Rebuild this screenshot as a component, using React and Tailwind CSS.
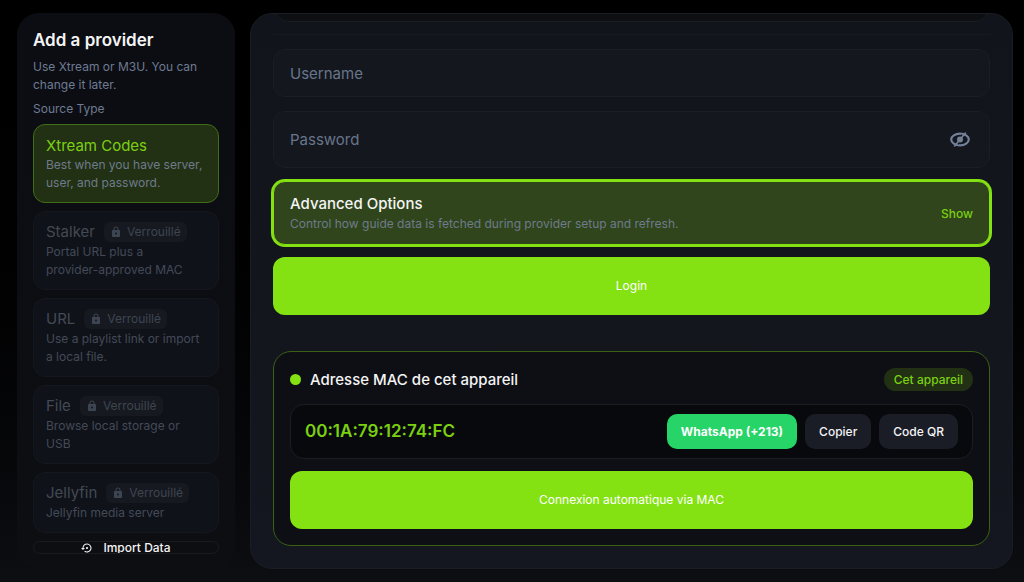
import React, { useState } from 'react';
import { MdLock, MdSettingsBackupRestore } from 'react-icons/md';

const LOCKED_SOURCES = [
  { id: 'stalker', name: 'Stalker', description: 'Portal URL plus a\nprovider-approved MAC' },
  { id: 'url', name: 'URL', description: 'Use a playlist link or import a local file.' },
  { id: 'file', name: 'File', description: 'Browse local storage or USB' },
  { id: 'jellyfin', name: 'Jellyfin', description: 'Jellyfin media server' },
];

const MAC_ADDRESS = '00:1A:79:12:74:FC';

const HiddenEyeIcon = () => (
  <svg width="20" height="16" viewBox="0 0 20 16" fill="none" stroke="currentColor" aria-hidden="true">
    <ellipse cx="10" cy="7.5" rx="8.8" ry="5.8" strokeWidth="2.2" />
    <path d="M13.2 3.6 6.8 11.4" stroke="#14171e" strokeWidth="4" />
    <circle cx="10" cy="7.5" r="3" fill="currentColor" stroke="none" />
    <path d="M15.8 0.6 4.2 14.4" strokeWidth="1.6" />
  </svg>
);

const LockedSource = ({ name, description }) => (
  <button
    type="button"
    disabled
    className="w-full shrink-0 rounded-xl border border-[#14171d] bg-[#0f1218] px-3 py-2.5 text-left"
  >
    <span className="flex h-[21px] items-start gap-[9px]">
      <span className="text-[15px] leading-5 text-[#434955]">{name}</span>
      <span className="flex h-5 items-center gap-[5px] rounded-md bg-[#16191f] px-1.5 text-xs text-[#3e4552]">
        <MdLock className="size-3" />
        Verrouillé
      </span>
    </span>
    <span className="block text-xs leading-[18px] whitespace-pre-line text-[#434a58]">{description}</span>
  </button>
);

const Sidebar = () => (
  <aside className="flex w-[218px] shrink-0 flex-col rounded-[22px] bg-linear-to-b from-[#0c0d13] to-[#0d0e11] px-4 py-[15px]">
    <h1 className="text-[17px] leading-6 font-semibold text-[#f4f4f5]">Add a provider</h1>
    <p className="mt-1.5 text-xs leading-[18px] text-[#6e7b92]">Use Xtream or M3U. You can change it later.</p>
    <h2 className="mt-[5px] text-xs leading-5 text-[#6e7b92]">Source Type</h2>

    <div className="mt-[5px] flex min-h-0 flex-1 flex-col gap-2">
      <button
        type="button"
        className="w-full shrink-0 rounded-xl border border-[#3f6f14] bg-[#223014] px-3 py-2.5 text-left"
      >
        <span className="block text-[15px] leading-[21px] text-[#7bd012]">Xtream Codes</span>
        <span className="block text-xs leading-[18px] text-[#6e7b8c]">Best when you have server, user, and password.</span>
      </button>

      {LOCKED_SOURCES.map((source) => (
        <LockedSource key={source.id} name={source.name} description={source.description} />
      ))}

      <button
        type="button"
        className="flex min-h-0 flex-1 items-start justify-center gap-2.5 overflow-hidden rounded-lg border border-[#191b20] text-xs leading-3 font-medium text-[#f4f4f5]"
      >
        <MdSettingsBackupRestore className="size-3 shrink-0" />
        Import Data
      </button>
    </div>
  </aside>
);

const App = () => {
  const [username, setUsername] = useState('');
  const [password, setPassword] = useState('');
  const [showPassword, setShowPassword] = useState(false);

  return (
    <div className="flex h-screen gap-[15px] overflow-hidden bg-linear-to-b from-black to-[#0d0e12] pt-[13px] pr-[11px] pb-[13px] pl-[17px] font-['Inter',sans-serif]">
      <Sidebar />

      <main className="flex min-w-0 flex-1 flex-col overflow-hidden rounded-[22px] border border-[#1a1d24] bg-linear-to-b from-[#12141b] to-[#14171f] px-[22px]">
        {/* Tail of the card scrolled above */}
        <div className="-mt-10 h-12 shrink-0 rounded-2xl border border-[#1a1d24] bg-[#0e0f13]" />
        <hr className="mt-3 shrink-0 border-[#171a21]" />

        <form className="mt-3.5 shrink-0" onSubmit={(e) => e.preventDefault()}>
          <input
            type="text"
            aria-label="Username"
            placeholder="Username"
            value={username}
            onChange={(e) => setUsername(e.target.value)}
            className="block h-12 w-full rounded-xl border border-[#1b1e26] bg-[#14171e] px-4 text-[15px] text-white outline-none placeholder:text-[#68758b]"
          />

          <div className="mt-3.5 flex h-[57px] items-center rounded-xl border border-[#1b1e26] bg-[#14171e] px-4">
            <input
              type={showPassword ? 'text' : 'password'}
              aria-label="Password"
              placeholder="Password"
              value={password}
              onChange={(e) => setPassword(e.target.value)}
              className="h-full min-w-0 flex-1 bg-transparent text-[15px] text-white outline-none placeholder:text-[#68758b]"
            />
            <button
              type="button"
              aria-label="Toggle password visibility"
              onClick={() => setShowPassword(!showPassword)}
              className="mr-[3px] text-[#728098]"
            >
              <HiddenEyeIcon />
            </button>
          </div>

          <button
            type="button"
            className="mt-[13px] flex h-16 w-full items-center justify-between rounded-xl border border-[#84e212] bg-[#30451b] px-4 pt-0.5 text-left ring-2 ring-[#84e212]"
          >
            <span>
              <span className="block text-[15px] leading-5 font-medium text-[#f4f4f5]">Advanced Options</span>
              <span className="block text-xs leading-5 text-[#6e7b8c]">
                Control how guide data is fetched during provider setup and refresh.
              </span>
            </span>
            <span className="text-xs font-medium text-[#7bd012]">Show</span>
          </button>

          <button
            type="submit"
            className="mt-3 h-[58px] w-full rounded-xl bg-[#84e212] text-xs text-white"
          >
            Login
          </button>
        </form>

        <section className="mt-9 shrink-0 rounded-[18px] border border-[#3b6214] bg-[#0e0f14] p-4">
          <div className="flex h-[23px] items-center">
            <span className="size-[11px] rounded-full bg-[#84e212]" />
            <h2 className="ml-[9px] flex-1 text-[15px] leading-6 font-medium text-[#f4f4f5]">Adresse MAC de cet appareil</h2>
            <span className="rounded-full bg-[#223014] px-2.5 text-xs leading-[23px] font-medium text-[#7bd012]">
              Cet appareil
            </span>
          </div>

          <div className="mt-[13px] flex h-[55px] items-center gap-2 rounded-[14px] border border-[#1a1d24] bg-[#08090c] px-3.5">
            <span className="flex-1 text-[17px] font-semibold text-[#7bd012]">{MAC_ADDRESS}</span>
            <button type="button" className="h-[35px] rounded-[10px] bg-[#27d468] px-3.5 text-xs font-bold text-white">
              WhatsApp (+213)
            </button>
            <button type="button" className="h-[35px] rounded-[10px] bg-[#1a1d25] px-3.5 text-xs font-medium text-[#f4f4f5]">
              Copier
            </button>
            <button type="button" className="h-[35px] rounded-[10px] bg-[#1a1d25] px-3.5 text-xs font-medium text-[#f4f4f5]">
              Code QR
            </button>
          </div>

          <button type="button" className="mt-3 h-[58px] w-full rounded-xl bg-[#84e212] text-xs text-white">
            Connexion automatique via MAC
          </button>
        </section>
      </main>
    </div>
  );
};

export default App;
